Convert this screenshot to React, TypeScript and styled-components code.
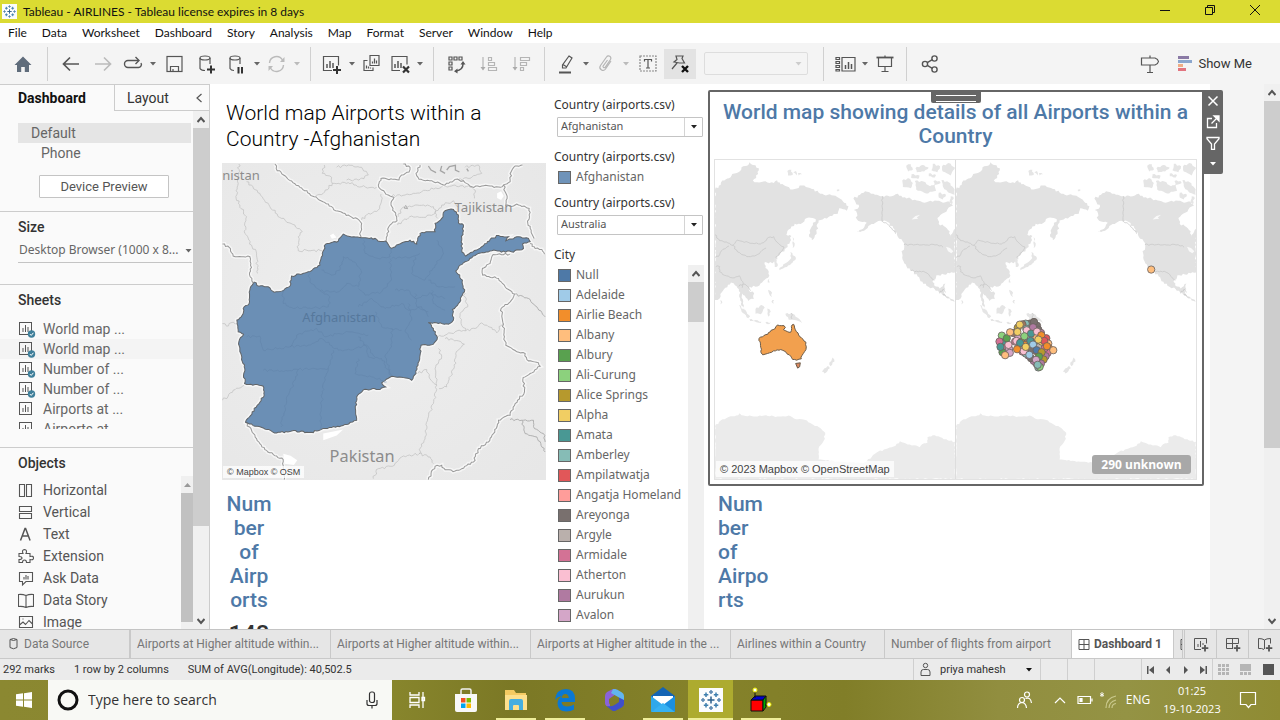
import React from "react";
import styled, { createGlobalStyle } from "styled-components";

const UI = 'Lato, "Open Sans", sans-serif';
const TASK = '"Open Sans", "Noto Sans", sans-serif';
const BOOK = 'Roboto, "Liberation Sans", sans-serif';
const WIDE = '"Noto Sans", "Open Sans", sans-serif';

const Global = createGlobalStyle`
  * { box-sizing: border-box; }
  html, body { margin: 0; padding: 0; }
  body { font-family: ${BOOK}; color: #333; background: #fff; overflow: hidden; }
  button, select, input { font: inherit; color: inherit; margin: 0; border-radius: 0; }
  button { background: none; border: 0; padding: 0; cursor: default; }
  ul { list-style: none; margin: 0; padding: 0; }
  h2, h3 { margin: 0; }
  svg { display: block; flex: none; }
`;

const Page = styled.div`
  display: flex;
  flex-direction: column;
  height: 100vh;
`;

/* ---------- icons ---------- */

type GlyphProps = {
  w?: number;
  h?: number;
  vb?: string;
  sw?: number;
  color?: string;
  children: React.ReactNode;
};

const Glyph = ({ w = 20, h = 20, vb, sw = 1.2, color = "#555", children }: GlyphProps) => (
  <svg
    width={w}
    height={h}
    viewBox={vb ?? `0 0 ${w} ${h}`}
    fill="none"
    stroke={color}
    strokeWidth={sw}
    aria-hidden="true"
  >
    {children}
  </svg>
);

const Caret = ({ color = "#666", w = 6 }: { color?: string; w?: number }) => (
  <Glyph w={w} h={4} vb="0 0 6 4" sw={0}>
    <path d="M0 0h6L3 3.6z" fill={color} />
  </Glyph>
);

const TableauMark = ({ size }: { size: number }) => (
  <svg width={size} height={size} viewBox="0 0 24 24" aria-hidden="true">
    <rect width="24" height="24" fill="#fbfcfd" />
    <g stroke="#3f7fae" strokeWidth="1.500">
      <path d="M12 8.500v7M8.500 12h7" stroke="#2c5f8c" />
      <path d="M12 2v4M10 4h4M12 18v4M10 20h4M2 12h4M4 10v4M18 12h4M20 10v4" stroke="#5b86b0" />
      <path d="M7 4.500v4.500M4.800 6.800h4.500M17 4.500v4.500M14.800 6.800h4.500M7 15v4.500M4.800 17.200h4.500M17 15v4.500M14.800 17.200h4.500" />
    </g>
  </svg>
);

const Bars = ({ x, y, color = "#555" }: { x: number; y: number; color?: string }) => (
  <path d={`M${x} ${y}v-4M${x + 3} ${y}v-7M${x + 6} ${y}v-5`} stroke={color} strokeWidth="1.5" />
);

/* ---------- title bar and menu ---------- */

const TitleBar = styled.header`
  display: flex;
  align-items: center;
  height: 23px;
  flex: none;
  padding: 0 3px 0 2px;
  background: #dbdb32;
  color: #111;
  font: 12px/16px ${UI};
  gap: 6px;
`;

const WindowButtons = styled.div`
  display: flex;
  margin-left: auto;
  height: 100%;
`;

const WindowButton = styled.button`
  width: 45px;
  display: grid;
  place-items: center;
  padding-bottom: 3px;
`;

const MenuBar = styled.nav`
  display: flex;
  align-items: center;
  gap: 15px;
  height: 20px;
  flex: none;
  padding-left: 8px;
  font: 12px/16px ${UI};
  color: #111;
  white-space: nowrap;
`;

/* ---------- toolbar ---------- */

const ToolBar = styled.div`
  display: flex;
  align-items: center;
  height: 41px;
  flex: none;
  padding: 0 28px 0 6px;
  background: #f4f4f4;
`;

const ToolButton = styled.button<{ $w?: number; $active?: boolean }>`
  display: grid;
  place-items: center;
  width: ${(p) => p.$w ?? 28}px;
  height: 30px;
  flex: none;
  background: ${(p) => (p.$active ? "#e3e3e3" : "transparent")};
`;

const Separator = styled.span`
  width: 1px;
  height: 34px;
  margin: 0 7px;
  background: #d0d0d0;
  flex: none;
`;

const FitBox = styled.div`
  position: relative;
  width: 104px;
  margin: 0 8px;
  flex: none;
  svg {
    position: absolute;
    right: 6px;
    top: 10px;
    pointer-events: none;
  }
`;

const FitSelect = styled.select`
  display: block;
  width: 100%;
  height: 23px;
  appearance: none;
  border: 1px solid #d4d4d4;
  border-radius: 2px;
  background: #f4f4f4;
`;

const Spring = styled.span`
  flex: 1;
`;

const ShowMe = styled.button`
  display: flex;
  align-items: center;
  gap: 6px;
  margin-left: 12px;
  font-size: 13px;
  line-height: 20px;
  color: #333;
`;

const DropCaret = ({ off, label }: { off?: boolean; label: string }) => (
  <ToolButton $w={12} aria-label={label}>
    <Caret color={off ? "#bbb" : "#666"} />
  </ToolButton>
);

const Toolbar = () => (
  <ToolBar>
    <ToolButton $w={34} aria-label="Start page">
      <Glyph sw={0}>
        <path d="M10 2.500L18.500 11H16v7h-4.200v-5H8.200v5H4v-7H1.500z" fill="#5f6c7b" />
      </Glyph>
    </ToolButton>
    <Separator />
    <ToolButton $w={32} aria-label="Undo">
      <Glyph sw={1.7}><path d="M18 10H3M9 3.500L2.500 10l6.500 6.500" /></Glyph>
    </ToolButton>
    <ToolButton $w={32} aria-label="Redo">
      <Glyph sw={1.7} color="#bbb"><path d="M2 10h15M11 3.500l6.500 6.500-6.500 6.500" /></Glyph>
    </ToolButton>
    <ToolButton aria-label="Replay">
      <Glyph sw={1.4}>
        <path d="M15 6.500H5a3.500 3.500 0 0 0 0 7h10a3 3 0 0 0 3-4.500" />
        <path d="M12.500 3l3.500 3.500-3.500 3.500" />
      </Glyph>
    </ToolButton>
    <DropCaret label="Replay options" />
    <ToolButton $w={32} aria-label="Save">
      <Glyph><rect x="2" y="2.500" width="15" height="15" /><path d="M5.500 17.500v-5h8v5M8 17.500v-2.500" /></Glyph>
    </ToolButton>
    <ToolButton $w={32} aria-label="New data source">
      <Glyph>
        <ellipse cx="8" cy="4" rx="5" ry="2" />
        <path d="M3 4v10.500q1 2 5 2M13 4v6" />
        <path d="M14 11.500v8M10 15.500h8" stroke="#333" strokeWidth="2" />
      </Glyph>
    </ToolButton>
    <ToolButton aria-label="Pause updates">
      <Glyph>
        <ellipse cx="8" cy="4" rx="5" ry="2" />
        <path d="M3 4v10.500q1 2 4 2M13 4v6" />
        <path d="M11.500 13v6.500M15 13v6.500" stroke="#333" strokeWidth="2" />
      </Glyph>
    </ToolButton>
    <DropCaret label="Update options" />
    <ToolButton aria-label="Run update">
      <Glyph color="#bbb" sw={1.4}>
        <path d="M2.500 9a7 7 0 0 1 13-3M16.500 11a7 7 0 0 1-13 3" />
        <path d="M17.500 3v5h-4.500zM1.500 17v-5H6z" fill="#bbb" stroke="none" />
      </Glyph>
    </ToolButton>
    <DropCaret off label="Run options" />
    <Separator />
    <ToolButton aria-label="New worksheet">
      <Glyph>
        <path d="M10 16.500H1.500v-14h15v9" /><Bars x={5} y={14} />
        <path d="M15 12v8M11 16h8" stroke="#333" strokeWidth="2" />
      </Glyph>
    </ToolButton>
    <DropCaret label="New options" />
    <ToolButton aria-label="Duplicate">
      <Glyph>
        <path d="M8 1.500h9v10H8zM5.500 6.500H2v10h9v-3" />
        <path d="M10.500 9.500v-2M12.500 9.500v-5M14.500 9.500v-3M4.500 14.500v-3M6.500 14.500v-2M8.500 14.500v-1" />
      </Glyph>
    </ToolButton>
    <ToolButton aria-label="Clear sheet">
      <Glyph>
        <path d="M10 16.500H2v-14h15v8" /><Bars x={5} y={14} />
        <path d="M13 12.500l6 6M19 12.500l-6 6" stroke="#333" strokeWidth="2.200" />
      </Glyph>
    </ToolButton>
    <DropCaret label="Clear options" />
    <Separator />
    <ToolButton $w={32} aria-label="Swap rows and columns">
      <Glyph>
        <path d="M2 3h3v3H2zM7 3h3v3H7zM12 3h3v3h-3zM2 8h3v3H2zM2 13h3v3H2z" />
        <path d="M16 10q0 6-7 7" strokeWidth="1.500" />
        <path d="M13.500 10.500L16 7l2.500 3.500zM10.500 14.500L7 17.200l3.500 2.300z" fill="#555" stroke="none" />
      </Glyph>
    </ToolButton>
    <ToolButton $w={32} aria-label="Sort ascending">
      <Glyph color="#b5b5b5">
        <path d="M4 3v12M9.500 3.500h3v3h-3zM9.500 8.500h6v3h-6zM9.500 13.500h8v3h-8z" />
        <path d="M1.500 13L4 16.500 6.500 13z" fill="#aaa" stroke="none" />
      </Glyph>
    </ToolButton>
    <ToolButton $w={32} aria-label="Sort descending">
      <Glyph color="#b5b5b5">
        <path d="M4 3v12M9.500 3.500h9v3h-9zM9.500 8.500h6v3h-6zM9.500 13.500h3v3h-3z" />
        <path d="M1.500 13L4 16.500 6.500 13z" fill="#aaa" stroke="none" />
      </Glyph>
    </ToolButton>
    <Separator />
    <ToolButton aria-label="Highlight">
      <Glyph>
        <path d="M13 2l3 2-6 10H6.500V11zM7 10.500l3.500 2.200" />
        <path d="M3 18.500h12" strokeWidth="2" />
      </Glyph>
    </ToolButton>
    <DropCaret label="Highlight options" />
    <ToolButton aria-label="Group members">
      <Glyph color="#b5b5b5">
        <path d="M15 7l-5.500 8a3 3 0 0 1-5-3.500L10.500 3a2.300 2.300 0 0 1 4 2.500L9 13.500a1.300 1.300 0 0 1-2-1.300L11.500 6" />
      </Glyph>
    </ToolButton>
    <DropCaret off label="Group options" />
    <ToolButton $w={32} aria-label="Show mark labels">
      <Glyph color="#888">
        <rect x="2" y="2" width="16" height="15" strokeDasharray="2 1" />
        <path d="M6.500 7.500v-2h7v2M10 5.500v8.500M8 14h4" stroke="#555" />
      </Glyph>
    </ToolButton>
    <ToolButton $w={32} $active aria-label="Fix axes">
      <Glyph>
        <path d="M6 2h7l-1 2.500 2.500 4.500H9.500L4 8l3-2.500zM7 9L2 15" />
        <path d="M12 12l6 6M18 12l-6 6" stroke="#111" strokeWidth="2.400" />
      </Glyph>
    </ToolButton>
    <FitBox>
      <FitSelect aria-label="Fit" disabled><option /></FitSelect>
      <Caret color="#ccc" w={7} />
    </FitBox>
    <Separator />
    <ToolButton aria-label="Show cards">
      <Glyph w={22}>
        <path d="M2 3.500h3.500v2H2zM2 7.500h3.500v2H2zM2 11.500h3.500v2H2zM2 15.500h3.500v1.500H2zM8 3.500h13V17H8z" />
        <Bars x={11.5} y={15} />
      </Glyph>
    </ToolButton>
    <DropCaret label="Card options" />
    <ToolButton aria-label="Presentation mode">
      <Glyph>
        <path d="M1.500 3.500h17" strokeWidth="1.800" /><path d="M3.500 4v8.500h13V4M10 12.500v5M6.500 17.500h7M10 1.500v2" />
      </Glyph>
    </ToolButton>
    <Separator />
    <ToolButton $w={32} aria-label="Share">
      <Glyph sw={1.4}>
        <circle cx="5" cy="10" r="2.600" /><circle cx="14.500" cy="4.500" r="2.600" /><circle cx="14.500" cy="15.500" r="2.600" />
        <path d="M7.300 8.700l5-3M7.300 11.300l5 3" />
      </Glyph>
    </ToolButton>
    <Spring />
    <ToolButton $w={32} aria-label="Guide">
      <Glyph>
        <path d="M1.500 4H15q3 1 3.500 3.500-.5 2.500-3.500 3.500H1.500zM10 1.500V4M10 11v7M7 18.500h6" />
      </Glyph>
    </ToolButton>
    <ShowMe>
      <svg width="14" height="16" viewBox="0 0 14 16" aria-hidden="true">
        <path d="M0 0h11v3H0z" fill="#8a7aa5" />
        <path d="M0 4h14v3H0z" fill="#8ba6cd" />
        <path d="M0 8h5v3H0z" fill="#efad85" />
        <path d="M0 12h8v3H0z" fill="#e2747f" />
      </svg>
      Show Me
    </ShowMe>
  </ToolBar>
);

/* ---------- side panel ---------- */

const Body = styled.div`
  display: flex;
  flex: 1;
  min-height: 0;
  overflow: hidden;
`;

const Side = styled.aside`
  display: flex;
  flex-direction: column;
  width: 210px;
  flex: none;
  border-top: 1px solid #ccc;
  border-right: 1px solid #ccc;
  background: #fafafa;
  overflow: hidden;
`;

const SideTabs = styled.div`
  display: flex;
  height: 26px;
  flex: none;
`;

const SideTab = styled.button<{ $on?: boolean }>`
  width: ${(p) => (p.$on ? "114px" : "auto")};
  flex: ${(p) => (p.$on ? "none" : "1")};
  padding-left: ${(p) => (p.$on ? "18px" : "12px")};
  text-align: left;
  font-size: 14px;
  font-weight: ${(p) => (p.$on ? 700 : 400)};
  color: ${(p) => (p.$on ? "#111" : "#333")};
  border: solid #ccc;
  border-width: ${(p) => (p.$on ? "0" : "0 0 1px 1px")};
`;

const Collapse = styled.button`
  width: 21px;
  border-bottom: 1px solid #ccc;
  display: grid;
  place-items: center;
`;

const SideBody = styled.div`
  display: flex;
  flex: 1;
  min-height: 0;
`;

const SideContent = styled.div`
  display: flex;
  flex-direction: column;
  flex: 1;
  min-width: 0;
`;

const Section = styled.section<{ $h?: number }>`
  flex: ${(p) => (p.$h ? "none" : "1")};
  min-height: ${(p) => (p.$h ? `${p.$h}px` : "0")};
  padding-left: 18px;
  border-bottom: 1px solid #ccc;
  overflow: hidden;
  &:last-child { border: 0; }
`;

const Heading = styled.h3`
  display: block;
  padding-top: 5px;
  font-size: 14px;
  line-height: 20px;
  font-weight: 500;
  color: #333;
`;

const DeviceBox = styled.div`
  padding-top: 12px;
`;

const Device = styled.button<{ $on?: boolean }>`
  display: block;
  width: calc(100% - 2px);
  height: 20px;
  padding-left: ${(p) => (p.$on ? 13 : 23)}px;
  background: ${(p) => (p.$on ? "#e5e5e5" : "transparent")};
  text-align: left;
  font-size: 14px;
  color: #666;
`;

const Preview = styled.button`
  display: block;
  width: 130px;
  height: 23px;
  margin: 12px 0 0 21px;
  border: 1px solid #c4c4c4;
  border-radius: 1px;
  background: #fff;
  font-size: 13px;
  color: #555;
`;

const SizeBox = styled.div`
  position: relative;
  margin-top: 3px;
  margin-right: 1px;
  border-bottom: 1px solid #c4c4c4;
  svg { position: absolute; right: 0; top: 9px; pointer-events: none; }
  select {
    display: block;
    width: 100%;
    height: 22px;
    padding: 0 0 2px 1px;
    appearance: none;
    border: 0;
    background: transparent;
    font: 12px/20px ${WIDE};
    color: #666;
  }
`;

const SheetList = styled.ul`
  height: 110px;
  margin: 9px 0 0 -18px;
  overflow: hidden;
`;

const SheetItem = styled.li<{ $hot?: boolean }>`
  display: flex;
  align-items: center;
  gap: 7px;
  height: 20px;
  padding-left: 18px;
  font-size: 14px;
  color: #666;
  background: ${(p) => (p.$hot ? "#f4f4f4" : "transparent")};
`;

const ObjectArea = styled.div`
  display: flex;
  margin-top: 3px;
  height: 154px;
`;

const ObjectList = styled.ul`
  flex: 1;
  padding-top: 3px;
`;

const ObjectItem = styled.li`
  display: flex;
  align-items: center;
  gap: 9px;
  height: 22px;
  font-size: 14px;
  color: #555;
`;

const Track = styled.div<{ $w: number }>`
  display: flex;
  flex-direction: column;
  align-items: center;
  width: ${(p) => p.$w}px;
  flex: none;
  background: #f0f0f0;
`;

const TrackEnd = styled.button`
  display: grid;
  place-items: center;
  width: 100%;
  height: 17px;
  flex: none;
`;

const Thumb = styled.div<{ $share: number; $tone?: string }>`
  width: 100%;
  flex: ${(p) => p.$share} 0 0;
  background: ${(p) => p.$tone ?? "#cdcdcd"};
`;

const Rest = styled.div<{ $share: number }>`
  flex: ${(p) => p.$share} 0 0;
`;

const Up = () => (
  <Glyph w={8} h={8} sw={2}><path d="M.5 6L4 2l3.500 4" /></Glyph>
);
const Down = () => (
  <Glyph w={8} h={8} sw={2}><path d="M.5 2L4 6l3.500-4" /></Glyph>
);

const SheetIcon = ({ used }: { used: boolean }) => (
  <Glyph w={18} h={18} sw={1}>
    <rect x="1.500" y="2.500" width="12" height="12" />
    <path d="M5 12V8M7.500 12V5M10 12V7" />
    {used && (
      <>
        <circle cx="13.500" cy="14" r="3.700" fill="#3f7f9a" stroke="none" />
        <path d="M11.800 14l1.400 1.400 2.200-2.600" stroke="#fff" />
      </>
    )}
  </Glyph>
);

const SHEETS: [string, boolean][] = [
  ["World map ...", true],
  ["World map ...", true],
  ["Number of ...", true],
  ["Number of ...", true],
  ["Airports at ...", false],
  ["Airports at ...", false],
];

const OBJECTS: [string, React.ReactNode][] = [
  ["Horizontal", <path d="M1.500 2.500h5v12h-5zM8.500 2.500h5v12h-5z" />],
  ["Vertical", <path d="M1.500 2.500h12v5h-12zM1.500 9.500h12v5h-12z" />],
  ["Text", <path d="M2.500 14.500L7 2.500h.6l4.500 12M4.300 10h6" strokeWidth="1.500" />],
  ["Extension", <path d="M1 5.500h4q-1.500-3.500 1.500-4 3 .5 1.500 4h4v3q3.500-1 3.500 1.500T12 11.500V14.500H8.500q0-2.500-2-2.500t-2 2.500H1v-3q3 0 3-1.500T1 8.500z" />],
  ["Ask Data", <path d="M1.500 2.500h13v9H8L4.500 15v-3.500h-3zM6 9.500V7M8 9.500V5M10 9.500V6" />],
  ["Data Story", <path d="M.5 2.500q4-.5 7.500 1 3.500-1.500 7.500-1v12q-4-.5-7.500 1-3.500-1.500-7.500-1zM8 3.500v12" />],
  ["Image", <path d="M1.500 2.500h13v11h-13zM1.500 11l3.500-3 2.500 2.500 3.500-4L14.500 10M4.500 5h1" />],
];

const SidePanel = () => (
  <Side>
    <SideTabs>
      <SideTab $on>Dashboard</SideTab>
      <SideTab>Layout</SideTab>
      <Collapse aria-label="Collapse">
        <Glyph w={8} h={12}><path d="M6.500 2L2 6l4.500 4" /></Glyph>
      </Collapse>
    </SideTabs>
    <SideBody>
      <SideContent>
        <Section $h={101}>
          <DeviceBox>
            <Device $on>Default</Device>
            <Device>Phone</Device>
            <Preview>Device Preview</Preview>
          </DeviceBox>
        </Section>
        <Section $h={73}>
          <Heading as="label" htmlFor="size">Size</Heading>
          <SizeBox>
            <select id="size"><option>Desktop Browser (1000 x 8...</option></select>
            <Caret w={7} />
          </SizeBox>
        </Section>
        <Section $h={163}>
          <Heading>Sheets</Heading>
          <SheetList>
            {SHEETS.map(([name, used], i) => (
              <SheetItem key={i} $hot={i === 1}>
                <SheetIcon used={used} />
                {name}
              </SheetItem>
            ))}
          </SheetList>
        </Section>
        <Section>
          <Heading>Objects</Heading>
          <ObjectArea>
            <ObjectList>
              {OBJECTS.map(([name, art]) => (
                <ObjectItem key={name}>
                  <Glyph w={16} h={17} sw={1.1}>{art}</Glyph>
                  {name}
                </ObjectItem>
              ))}
            </ObjectList>
            <Track $w={12}>
              <TrackEnd aria-label="Scroll objects up">
                <Glyph w={7} h={4} sw={0}><path d="M0 4h7L3.500 0z" fill="#999" /></Glyph>
              </TrackEnd>
              <Thumb $share={127} $tone="#c1c1c1" />
              <Rest $share={8} />
            </Track>
          </ObjectArea>
        </Section>
      </SideContent>
      <Track $w={16}>
        <TrackEnd aria-label="Scroll up"><Up /></TrackEnd>
        <Thumb $share={399} />
        <Rest $share={86} />
        <TrackEnd aria-label="Scroll down"><Down /></TrackEnd>
      </Track>
    </SideBody>
  </Side>
);

/* ---------- dashboard canvas ---------- */

const Canvas = styled.main`
  display: grid;
  grid-template-columns: minmax(0, 324fr) 162px minmax(0, 496fr);
  grid-template-rows: minmax(0, 1fr);
  flex: 1;
  min-width: 0;
  padding: 0 6px 0 12px;
  background: #fff;
`;

const Margin = styled.div`
  width: 54px;
  flex: none;
  background: #f4f4f4;
`;

const Column = styled.div`
  min-width: 0;
`;

const PlainTitle = styled.h2`
  height: 79px;
  padding: 16px 4px 0;
  font-size: 21px;
  line-height: 26px;
  font-weight: 300;
  color: #000;
`;

const MapFrame = styled.div<{ $h: number }>`
  position: relative;
  height: ${(p) => p.$h}px;
  overflow: hidden;
  svg { width: 100%; height: 100%; }
`;

const Credit = styled.span<{ $big?: boolean }>`
  position: absolute;
  left: 1px;
  bottom: 2px;
  padding: 0 4px;
  background: rgba(255, 255, 255, 0.75);
  font: ${(p) => (p.$big ? "11px/16px" : "9px/12px")} "Liberation Sans", sans-serif;
  color: #444;
`;

const Narrow = styled.h2<{ $center?: boolean }>`
  width: 54px;
  margin-left: ${(p) => (p.$center ? 0 : 10)}px;
  padding-top: ${(p) => (p.$center ? 12 : 6)}px;
  text-align: ${(p) => (p.$center ? "center" : "left")};
  font-size: 21px;
  line-height: 24px;
  font-weight: 500;
  color: #4e79a7;
  span { display: block; }
`;

const BigNumber = styled.div`
  width: 54px;
  padding-top: 8px;
  text-align: center;
  font-size: 24px;
  line-height: 28px;
  font-weight: 500;
  color: #333;
`;

const Filters = styled(Column)`
  display: flex;
  flex-direction: column;
  padding: 11px 5px 0 8px;
  font: 12px/20px ${WIDE};
  overflow: hidden;
`;

const FieldLabel = styled.label`
  display: block;
  color: #333;
`;

const Picker = styled.div`
  position: relative;
  margin: 2px 0 10px 3px;
  border: 1px solid #c4c4c4;
  border-radius: 1px;
  select {
    display: block;
    width: 100%;
    height: 18px;
    padding: 0 0 2px 3px;
    appearance: none;
    border: 0;
    background: #fff;
    font-size: 11px;
    line-height: 16px;
    color: #555;
  }
`;

const PickerArrow = styled.span`
  position: absolute;
  top: 0;
  right: 0;
  display: grid;
  place-items: center;
  width: 18px;
  height: 18px;
  border-left: 1px solid #d4d4d4;
  pointer-events: none;
`;

const LegendItem = styled.li`
  display: flex;
  align-items: center;
  gap: 5px;
  height: 20px;
  padding-left: 4px;
  color: #666;
  white-space: nowrap;
`;

const Swatch = styled.span<{ $c: string }>`
  width: 13px;
  height: 13px;
  border: 1px solid #666;
  background: ${(p) => p.$c};
`;

const LegendBlock = styled.div`
  height: 26px;
`;

const CityArea = styled.div`
  display: flex;
  flex: 1;
  min-height: 0;
  overflow: hidden;
  margin-right: -1px;
  ul { flex: 1; }
`;

const Zone = styled.section`
  position: relative;
  height: 396px;
  margin-top: 6px;
  padding: 8px 5px 0 4px;
  border: 2px solid #666;
  border-radius: 2px;
`;

const ZoneTitle = styled.h2`
  height: 59px;
  text-align: center;
  font-size: 21px;
  line-height: 24px;
  font-weight: 500;
  color: #4e79a7;
`;

const Grip = styled.div`
  position: absolute;
  top: -2px;
  left: calc(50% - 25px);
  width: 50px;
  height: 13px;
  padding: 5px 5px 0;
  background: #666;
  border-radius: 0 0 2px 2px;
  &::before {
    content: "";
    display: block;
    height: 5px;
    border: solid #fff;
    border-width: 1px 0;
  }
`;

const ZoneTools = styled.div`
  position: absolute;
  z-index: 1;
  top: -2px;
  left: 100%;
  width: 21px;
  height: 84px;
  background: #666;
  border-radius: 0 2px 2px 0;
  button { display: grid; place-items: center; width: 100%; height: 21px; }
`;

const WorldFrame = styled(MapFrame)`
  display: flex;
  border: 1px solid #e2e2e2;
  svg { flex: 1; width: 50%; }
  svg + svg { border-left: 1px solid #ddd; }
`;

const Unknown = styled.button`
  position: absolute;
  right: 5px;
  bottom: 5px;
  width: 99px;
  height: 19px;
  border-radius: 3px;
  background: #a8a8a8;
  color: #fff;
  font: 700 12px/18px ${TASK};
`;

/* Breaks each straight run of "x,y x,y ..." into short wandering steps, so it reads as a coast or border. */
const rough = (points: string, amp: number, closed = false) => {
  const pts = points.trim().split(/\s+/).map((p) => p.split(",").map(Number));
  if (closed) pts.push(pts[0]);
  let seed = 7;
  const rnd = () => {
    seed = (seed * 16807) % 2147483647;
    return seed / 2147483647 - 0.5;
  };
  let d = `M${pts[0][0]} ${pts[0][1]}`;
  for (let i = 1; i < pts.length; i++) {
    const [x0, y0] = pts[i - 1];
    const [x1, y1] = pts[i];
    const len = Math.hypot(x1 - x0, y1 - y0) || 1;
    const n = Math.max(1, Math.round(len / 6));
    for (let k = 1; k < n; k++) {
      const t = k / n;
      const off = rnd() * amp;
      const x = x0 + (x1 - x0) * t - ((y1 - y0) / len) * off;
      const y = y0 + (y1 - y0) * t + ((x1 - x0) / len) * off;
      d += `L${Math.round(x)} ${Math.round(y)}`;
    }
    d += `L${x1} ${y1}`;
  }
  return closed ? `${d}Z` : d;
};

const Lines = ({ list, amp = 6 }: { list: string[]; amp?: number }) => (
  <path d={list.map((l) => rough(l, amp)).join("")} />
);
const Shapes = ({ list, amp = 5 }: { list: string[]; amp?: number }) => (
  <path d={list.map((l) => rough(l, amp, true)).join("")} />
);

const NATIONAL = [
  "180,222 184,236 215,262 255,292 298,320 340,342 362,362 400,375 432,390 440,400 437,425 435,445",
  "23,462 43,472 55,498 105,500 108,520 106,560 114,578",
  "92,996 110,1020 125,1045 150,1078 175,1092 205,1108 208,1168",
  "565,222 585,232 582,246 560,255 552,270 498,265 490,285 500,300 520,315 537,322 528,345 542,375 546,392 525,405 516,430 513,455",
  "615,225 603,250 612,268 650,272 690,285 720,268 745,272 770,290 800,288 862,290 885,275 888,245 900,228 922,225",
  "865,285 870,305 876,325 872,345 895,348 905,342 942,355 943,380 938,400 948,420 957,445",
  "945,460 960,475 980,478 988,492",
  "884,492 834,493 825,520 802,535 803,555 850,565 880,598 898,612 885,635 858,655 862,690 868,740 872,765 905,785 930,790 935,808 970,818 975,828 950,848 924,862 928,905 900,940 885,975 850,990 835,1030 820,1055 790,1075 775,1115 740,1135 720,1142 690,1138 680,1125 660,1128 648,1150 640,1168",
];
const MINOR = [
  "898,612 940,625 965,650 990,680",
  "885,988 925,990 955,990 958,1015 985,1030 990,1055",
  "920,990 930,1030 965,1040 990,1085",
];
const PROVINCES = [
  "72,222 70,280 64,325 95,380 90,430 125,490 128,550",
  "95,275 135,310 165,350 200,385 240,405 262,425 250,440 250,482 322,482",
  "328,225 322,250 350,262 352,280 400,278 440,290 485,292",
  "352,280 325,310 300,320", "365,232 400,225 440,232 460,255 430,270 395,270",
  "440,390 455,375 490,360 500,330 498,312", "530,318 570,315 620,305 680,290 720,285 765,292 780,300 778,325",
  "548,405 560,395 590,378 625,382 660,370 680,345 715,332 730,350", "550,380 560,355 600,345 625,345 655,350 668,385",
  "750,232 790,225 800,250 770,262 730,268",
  "23,700 35,708 48,698 68,700", "23,930 40,918 55,900 88,885",
  "745,605 758,650 735,670 738,700 752,722 720,725 685,738 668,740",
  "752,722 780,715 800,698 830,712 845,728 862,700", "690,745 730,752 748,762 722,790 718,830 695,890 672,895",
  "608,850 635,838 648,870 665,885 655,940 640,980 630,1040 612,1090", "670,775 680,800 662,830 665,885",
  "612,1090 560,1100 538,1125 490,1135 475,1165", "612,1090 645,1100 655,1120",
];
const AFGHAN =
  "118,576 132,588 160,590 178,606 200,603 226,587 230,558 280,545 315,525 322,490 332,462 370,453 385,432 410,441 440,443 480,445 495,454 512,453 530,475 550,463 585,450 605,462 615,430 640,425 660,425 660,400 680,385 690,362 715,358 730,375 730,398 745,405 740,450 740,480 752,498 800,470 815,460 825,448 850,436 880,440 872,452 905,440 940,445 945,455 922,462 925,475 895,486 830,482 790,490 750,515 735,525 722,543 742,570 748,605 730,640 712,658 715,690 700,702 640,697 655,715 667,742 655,762 618,765 615,795 605,830 603,850 590,870 565,862 530,858 500,878 512,890 495,898 450,897 425,920 422,960 425,990 395,1003 350,1012 318,1018 288,1026 230,1022 185,1028 92,996 148,915 145,888 89,880 88,830 78,790 72,755 86,732 70,725 66,690 85,670 85,655 103,640 105,600";
const DISTRICTS = [
  "280,545 285,575 315,600 345,620 340,650 290,655 230,652 205,640 205,600",
  "315,603 370,605 395,580 430,590 438,540 410,510 385,500 375,540 350,555 320,540",
  "445,450 450,490 490,505 525,500 530,475", "525,505 530,570 500,605 450,615 430,595",
  "530,505 590,500 615,490", "600,500 590,550 630,570 660,525 685,490 665,450",
  "640,570 670,590 720,590", "540,600 580,600 600,625 650,610 690,625", "430,650 470,625 510,655 560,640 580,660 620,650 640,680",
  "580,640 590,690 570,725 590,750", "480,665 500,710 560,720", "95,740 135,738 145,780 225,770 245,735 305,715 330,740 400,725 460,735",
  "225,770 280,765 320,745 370,780 420,775 455,765 480,800", "355,780 340,840 325,880 320,950 316,1016",
  "145,840 200,842 250,838 240,870 215,930 198,1010", "250,838 300,835 340,835", "430,805 420,850 470,860 515,875",
  "430,740 455,770 460,800 500,805 528,855", "530,715 530,770 510,800 530,855", "600,610 605,650 640,665", "650,600 655,640 690,660",
];

const AfghanMap = () => (
  <svg viewBox="21 219 972 950" preserveAspectRatio="xMidYMid slice" role="img" aria-label="Map of Afghanistan">
    <defs>
      <radialGradient id="relief" cx="45%" cy="45%" r="75%">
        <stop offset="0" stopColor="#eeeeee" />
        <stop offset="1" stopColor="#e7e7e7" />
      </radialGradient>
    </defs>
    <rect x="21" y="219" width="972" height="950" fill="url(#relief)" />
    <g fill="none" stroke="#f6f6f6" strokeWidth="12">
      <Lines list={NATIONAL} />
      <Shapes list={[AFGHAN]} />
    </g>
    <path d="M846 310l12-6 8 14-8 12-12-6zM205 1090l22 6 20 14-10 14-28-4zM325 1030l60-12-20 18-40 14zM345 436l10-6 10 12-14 4z" fill="#fff" />
    <g fill="none" stroke="#bcbcbc" strokeWidth="2"><Lines list={PROVINCES} amp={8} /></g>
    <g fill="none" stroke="#999" strokeWidth="3"><Lines list={NATIONAL} /></g>
    <g fill="none" stroke="#a5a5a5" strokeWidth="2.500">
      <Lines list={MINOR} />
      <path d="M567 354l5-8 6 10z" />
      <path d="M640 228l8 12 15 8M680 228l-4 14 14 8M695 240l8-10 18-4 0 14 12 6M755 236l5 8" strokeWidth="4" />
    </g>
    <g fill="#6b8fb5" stroke="#606468" strokeWidth="3"><Shapes list={[AFGHAN]} /></g>
    <g fill="none" stroke="#6083a8" strokeWidth="1.500"><Lines list={DISTRICTS} amp={8} /></g>
    <g fontFamily={WIDE} fill="#8c8c8c">
      <text x="22" y="270" fontSize="39">nistan</text>
      <text x="718" y="366" fontSize="40">Tajikistan</text>
      <text x="262" y="696" fontSize="39" fill="#56789c">Afghanistan</text>
      <text x="344" y="1114" fontSize="49">Pakistan</text>
    </g>
  </svg>
);

const CONTINENTS = [
  // Asia
  "28,312 45,298 50,285 70,278 80,265 102,258 108,245 125,240 132,230 142,238 160,248 158,265 142,285 155,290 180,287 205,292 215,284 225,296 245,303 262,312 290,300 320,310 345,325 385,330 405,340 430,362 425,376 402,368 398,385 370,395 340,405 334,440 320,465 312,455 316,430 332,402 305,398 292,412 268,415 250,432 243,448 258,452 252,475 238,492 222,510 205,530 190,535 178,530 180,548 190,560 188,578 170,592 150,605 132,605 130,615 146,625 145,642 128,648 118,632 110,625 112,655 122,680 108,662 104,640 100,618 88,600 76,592 55,612 42,640 28,645",
  // North America
  "445,340 465,328 480,317 505,325 532,332 560,332 572,326 600,335 630,343 665,350 690,345 715,352 735,348 745,360 728,372 712,385 698,398 702,415 722,425 735,438 738,455 745,440 751,430 751,562 735,564 718,568 695,570 686,585 688,600 705,610 722,595 722,612 718,622 735,640 750,650 735,640 712,628 690,612 665,602 645,582 622,556 608,550 596,528 592,505 598,480 590,462 576,448 565,428 548,410 532,408 515,410 500,416 488,428 470,438 455,441 478,425 485,412 465,408 452,396 456,384 446,374 462,364 452,352",
];
const ISLANDS = [
  "262,455 268,480 262,488", "255,500 272,518 262,532 245,545 222,555 222,548 244,532 258,518", "205,520 214,525 217,542 208,545",
  "187,592 192,580 193,592", "188,614 196,618 200,636 194,632", "198,650 206,645 205,656", "100,660 114,672 134,694 128,700 108,680",
  "132,703 168,710 166,714 134,708", "150,672 168,660 178,668 166,688 150,686", "186,670 196,680 190,695 186,685",
  "240,686 262,686 282,702 290,714 272,706 250,704", "180,712 196,712 188,718", "44,645 50,653 44,658",
  "382,818 388,830 376,844 372,838", "366,844 374,850 358,866 350,860", "246,256 258,252 262,268 248,270", "264,260 272,256 274,270",
  "278,262 290,266 280,270", "394,313 404,313 398,318", "592,285 612,278 624,292 618,308 594,304", "630,286 656,288 676,302 690,296 694,316 664,324 634,312",
  "604,240 618,236 624,252 610,258", "632,248 652,238 672,246 658,258 636,260", "684,234 706,242 698,260 680,254",
  "712,242 732,232 751,246 738,270 714,258", "686,286 704,286 708,292 690,298", "710,284 732,290 750,312 750,328 732,322 716,306",
  "702,322 724,328 714,342 702,336", "672,264 694,268 690,276 672,272", "738,332 746,334 742,356 736,352", "620,266 644,270 640,280 618,276",
];
const ANTARCTICA =
  "28,1025 45,1008 75,995 98,992 102,986 108,992 150,996 182,992 216,996 250,993 272,1004 300,1006 320,1018 345,1030 360,1045 356,1068 340,1092 340,1125 385,1130 475,1136 500,1118 515,1104 548,1092 572,1084 585,1070 615,1080 645,1088 658,1076 668,1075 668,1058 690,1052 712,1060 730,1068 751,1072 751,1184 28,1184";
const WORLD_BORDERS = [
  "532,332 532,408 548,416 560,428 572,445", "597,478 697,478 715,486", "618,556 640,560 655,558 672,568 688,586",
  "705,625 715,612 722,622", "715,628 735,640",
  "28,448 42,466 62,470 82,480 95,464 110,468 140,474 165,476 178,468 190,456 205,454 214,470 236,485 228,500 210,516",
  "82,480 96,500 124,514 152,510 165,500 182,488", "28,518 42,508 52,492 70,482",
  "30,544 42,544 42,560 56,570 80,578 102,572 112,590 110,608", "100,604 114,596 126,604 136,616", "258,684 260,702",
];
const AUSSIE =
  "161,760 175,752 187,748 197,736 208,732 216,720 236,722 240,728 234,734 246,740 256,742 260,720 265,718 270,734 280,750 292,762 302,772 303,786 298,800 290,812 288,822 274,826 262,824 256,814 246,808 236,798 226,794 204,798 186,806 172,810 167,804 166,788";

const Land = () => (
  <>
    <g fill="#e2e2e2"><Shapes list={CONTINENTS} amp={7} /></g>
    <g fill="#e5e5e5"><Shapes list={ISLANDS} /></g>
    <g fill="#ebebeb"><Shapes list={[ANTARCTICA]} amp={4} /></g>
    <path d="M620 402l12-10 14-4-10 8 4 4zM724 484l12 4 10 10-6 6-10-6z" fill="#fff" opacity=".8" />
    <g fill="none" stroke="#c4c4c4" strokeWidth="2"><Lines list={WORLD_BORDERS} amp={5} /></g>
  </>
);

const DOT_COLORS = [
  "#4e79a7", "#a0cbe8", "#f28e2b", "#ffbe7d", "#59a14f", "#8cd17d", "#b6992d", "#f1ce63",
  "#499894", "#86bcb6", "#e15759", "#ff9d9a", "#79706e", "#bab0ac", "#d37295", "#fabfd2",
  "#b07aa1", "#d4a6c8", "#9d7660", "#d7b5a6",
];

/* x, y, index into DOT_COLORS */
const DOTS: number[][] = [
  [176, 770, 8], [170, 790, 14], [168, 802, 4], [188, 792, 17], [206, 770, 14], [214, 760, 17],
  [262, 712, 12], [258, 722, 18], [272, 722, 12], [276, 734, 12], [250, 716, 12], [238, 716, 9],
  [228, 718, 18], [214, 728, 6], [240, 732, 9], [200, 744, 18], [218, 778, 9], [210, 768, 15],
  [226, 770, 6], [244, 770, 18], [250, 784, 5], [236, 780, 2], [260, 742, 0], [284, 744, 16],
  [290, 760, 16], [300, 760, 10], [306, 776, 3], [308, 790, 2], [304, 804, 14], [298, 814, 16],
  [292, 824, 6], [284, 836, 16], [276, 848, 9], [270, 836, 17], [262, 828, 16], [254, 820, 12],
  [246, 812, 16], [238, 806, 9], [228, 800, 14], [272, 800, 2], [256, 796, 12], [278, 786, 13],
  [286, 770, 7], [264, 770, 4], [270, 756, 3], [166, 752, 5], [159, 770, 14], [162, 786, 8],
  [186, 780, 15], [190, 804, 17], [181, 760, 4], [176, 811, 3], [191, 742, 3], [213, 741, 7],
  [220, 719, 7], [263, 711, 12], [260, 727, 16], [241, 736, 15], [254, 746, 8], [234, 754, 5],
  [272, 740, 15], [285, 751, 2], [294, 768, 10], [276, 764, 7], [221, 774, 8], [212, 793, 2],
  [232, 799, 15], [238, 786, 7], [252, 768, 8], [260, 779, 1], [271, 796, 0], [295, 790, 14],
  [286, 802, 6], [249, 810, 1], [278, 815, 4], [269, 825, 17], [280, 846, 5], [274, 840, 9],
  [302, 784, 2], [321, 796, 3], [616, 553, 3],
];

const WorldPanel = ({ dots }: { dots?: boolean }) => (
  <svg viewBox="28 223 723 961" preserveAspectRatio="none" role="img" aria-label={dots ? "Airports by city" : "Country outline"}>
    <Land />
    {dots ? (
      DOTS.map(([x, y, c], i) => (
        <circle key={i} cx={x} cy={y} r="11" fill={DOT_COLORS[c]} stroke="#6a625e" strokeWidth="2.500" />
      ))
    ) : (
      <g fill="#f2a04e" stroke="#6a5a48" strokeWidth="3">
        <Shapes list={[AUSSIE]} amp={4} />
        <path d="M271 836l14-2-2 12-6 4z" fill="#d9875f" />
      </g>
    )}
  </svg>
);

const CITIES: [string, string][] = [
  ["Null", "#4e79a7"], ["Adelaide", "#a0cbe8"], ["Airlie Beach", "#f28e2b"], ["Albany", "#ffbe7d"],
  ["Albury", "#59a14f"], ["Ali-Curung", "#8cd17d"], ["Alice Springs", "#b6992d"], ["Alpha", "#f1ce63"],
  ["Amata", "#499894"], ["Amberley", "#86bcb6"], ["Ampilatwatja", "#e15759"], ["Angatja Homeland", "#ff9d9a"],
  ["Areyonga", "#79706e"], ["Argyle", "#bab0ac"], ["Armidale", "#d37295"], ["Atherton", "#fabfd2"],
  ["Aurukun", "#b07aa1"], ["Avalon", "#d4a6c8"],
];

const CountryPicker = ({ id, value }: { id: string; value: string }) => (
  <>
    <FieldLabel htmlFor={id}>Country (airports.csv)</FieldLabel>
    <Picker>
      <select id={id}><option>{value}</option></select>
      <PickerArrow><Caret color="#222" w={8} /></PickerArrow>
    </Picker>
  </>
);

const Dashboard = () => (
  <>
    <Canvas>
      <Column>
        <PlainTitle>World map Airports within a Country -Afghanistan</PlainTitle>
        <MapFrame $h={317}>
          <AfghanMap />
          <Credit>© Mapbox © OSM</Credit>
        </MapFrame>
        <Narrow $center>
          {["Num", "ber", "of", "Airp", "orts"].map((t) => <span key={t}>{t}</span>)}
        </Narrow>
        <BigNumber>148</BigNumber>
      </Column>
      <Filters>
        <CountryPicker id="country-a" value="Afghanistan" />
        <FieldLabel as="div">Country (airports.csv)</FieldLabel>
        <LegendBlock>
          <LegendItem as="div"><Swatch $c="#6f93b9" />Afghanistan</LegendItem>
        </LegendBlock>
        <CountryPicker id="country-b" value="Australia" />
        <FieldLabel as="div">City</FieldLabel>
        <CityArea>
          <ul>
            {CITIES.map(([name, c]) => (
              <LegendItem key={name}><Swatch $c={c} />{name}</LegendItem>
            ))}
            <LegendItem><Swatch $c="#9d7660" /></LegendItem>
          </ul>
          <Track $w={16}>
            <TrackEnd aria-label="Scroll cities up"><Up /></TrackEnd>
            <Thumb $share={40} />
            <Rest $share={308} />
          </Track>
        </CityArea>
      </Filters>
      <Column>
        <Zone>
          <ZoneTitle>World map showing details of all Airports within a Country</ZoneTitle>
          <WorldFrame $h={321}>
            <WorldPanel />
            <WorldPanel dots />
            <Credit $big>© 2023 Mapbox © OpenStreetMap</Credit>
            <Unknown>290 unknown</Unknown>
          </WorldFrame>
          <Grip />
          <ZoneTools>
            <button aria-label="Remove"><Glyph w={14} h={14} color="#fff" sw={1.5}><path d="M2.500 2.500l9 9M11.500 2.500l-9 9" /></Glyph></button>
            <button aria-label="Go to sheet"><Glyph w={14} h={14} color="#fff" sw={1.3}><path d="M6 3.500H1.500v9h9V8M5.500 8.500L11 3" /><path d="M8 1h5v5z" fill="#fff" /></Glyph></button>
            <button aria-label="Use as filter"><Glyph w={14} h={14} color="#fff" sw={1.3}><path d="M1 1.500h12v1.200L8.500 8v5.500h-3V8L1 2.700z" /></Glyph></button>
            <button aria-label="More options"><Caret color="#fff" w={8} /></button>
          </ZoneTools>
        </Zone>
        <Narrow>
          {["Num", "ber", "of", "Airpo", "rts"].map((t) => <span key={t}>{t}</span>)}
        </Narrow>
      </Column>
    </Canvas>
    <Margin />
    <Track $w={16}>
      <TrackEnd aria-label="Scroll dashboard up"><Up /></TrackEnd>
      <Thumb $share={347} />
      <Rest $share={164} />
      <TrackEnd aria-label="Scroll dashboard down"><Down /></TrackEnd>
    </Track>
  </>
);

/* ---------- sheet tabs and status ---------- */

const SheetTabs = styled.div`
  display: flex;
  height: 30px;
  flex: none;
  border-top: 1px solid #c4c4c4;
  border-bottom: 1px solid #c9c9c9;
  background: #e6e6e6;
  overflow: hidden;
`;

const SheetTab = styled.button<{ $w: number; $on?: boolean }>`
  display: flex;
  align-items: center;
  gap: 4px;
  flex: 0 1 ${(p) => p.$w}px;
  min-width: 0;
  padding-left: 6px;
  border-right: 1px solid #c9c9c9;
  background: ${(p) => (p.$on ? "#fff" : "transparent")};
  font-size: 12px;
  font-weight: ${(p) => (p.$on ? 700 : 400)};
  color: ${(p) => (p.$on ? "#555" : "#777")};
  white-space: nowrap;
  overflow: hidden;
  &:first-child { border-right-width: 2px; }
`;

const NewTab = styled.button`
  display: grid;
  place-items: center;
  width: 32px;
  flex: none;
  border-left: 1px solid #c9c9c9;
`;

const Status = styled.footer`
  display: flex;
  align-items: center;
  gap: 19px;
  height: 21px;
  flex: none;
  padding-left: 3px;
  background: #ebebeb;
  font-size: 11px;
  color: #333;
`;

const StatusRight = styled.div`
  display: flex;
  height: 100%;
  margin-left: auto;
`;

const Cell = styled.div<{ $w: number }>`
  display: flex;
  align-items: center;
  justify-content: space-around;
  width: ${(p) => p.$w}px;
  border-left: 1px solid #cfcfcf;
`;

const UserButton = styled.button`
  display: flex;
  align-items: center;
  gap: 9px;
  width: 100%;
  padding-left: 6px;
  svg:last-child { margin-left: 10px; }
`;

const GridIcon = () => (
  <path d="M1 1.500h10v10H1zM6 1.500v10M1 6.500h10" />
);

const TABS: [string, number][] = [
  ["Airports at Higher altitude within...", 200],
  ["Airports at Higher altitude within...", 200],
  ["Airports at Higher altitude in the ...", 200],
  ["Airlines within a Country", 154],
  ["Number of flights from airport", 187],
];

const BottomTabs = () => (
  <SheetTabs>
    <SheetTab $w={131}>
      <Glyph w={14} h={16} sw={1}><path d="M4 3.500v8q3.500 2.500 7 0v-8M4 3.500q3.500-2 7 0-3.500 2-7 0" /></Glyph>
      Data Source
    </SheetTab>
    {TABS.map(([name, w], i) => <SheetTab key={i} $w={w}>{name}</SheetTab>)}
    <SheetTab $w={102} $on>
      <Glyph w={12} h={13} sw={1}><GridIcon /></Glyph>
      Dashboard 1
    </SheetTab>
    <SheetTab $w={9} aria-label="Next tab">
      <Glyph w={12} h={13} sw={1}><GridIcon /></Glyph>
    </SheetTab>
    <Spring />
    <NewTab aria-label="New Worksheet">
      <Glyph w={16} h={16} sw={1}>
        <path d="M8 13.500H1.500v-11h12v5M5 11V8M7.500 11V5M10 9V7" /><path d="M12 9v6.500M8.800 12.200h6.500" strokeWidth="1.800" />
      </Glyph>
    </NewTab>
    <NewTab aria-label="New Dashboard">
      <Glyph w={16} h={16} sw={1}>
        <path d="M8 12.500H1.500v-10h12v5M7.500 2.500v10M1.500 7.500h12" /><path d="M12 9v6.500M8.800 12.200h6.500" strokeWidth="1.800" />
      </Glyph>
    </NewTab>
    <NewTab aria-label="New Story">
      <Glyph w={16} h={16} sw={1}>
        <path d="M7 13.500q-2-1.500-5.500-1v-10q4 0 6 1.500 2-1.500 6-1.500v5M7.500 4v9" /><path d="M12 9v6.500M8.800 12.200h6.500" strokeWidth="1.800" />
      </Glyph>
    </NewTab>
  </SheetTabs>
);

const StatusBar = () => (
  <Status>
    <span>292 marks</span>
    <span>1 row by 2 columns</span>
    <span>SUM of AVG(Longitude): 40,502.5</span>
    <StatusRight>
      <Cell $w={127}>
        <UserButton>
          <Glyph w={11} h={15} sw={1}>
            <circle cx="5.500" cy="3.500" r="2.200" /><path d="M1 13.500V10q0-2.500 2.500-2.500h4Q10 7.500 10 10v3.500z" />
          </Glyph>
          priya mahesh
          <Caret color="#111" w={8} />
        </UserButton>
      </Cell>
      <Cell $w={27} />
      <Cell $w={27} />
      <Cell $w={47} />
      <Cell $w={71}>
        <Glyph w={8} h={8} sw={0}><path d="M0 0h1.500v8H0zM7 0v8L2 4z" fill="#555" /></Glyph>
        <Glyph w={8} h={8} sw={0}><path d="M6 0v8L2 4z" fill="#555" /></Glyph>
        <Glyph w={8} h={8} sw={0}><path d="M2 0v8l4-4z" fill="#555" /></Glyph>
        <Glyph w={8} h={8} sw={0}><path d="M6.500 0H8v8H6.500zM1 0v8l5-4z" fill="#555" /></Glyph>
      </Cell>
      <Cell $w={68}>
        <Glyph w={12} h={12} sw={0}>
          <path d="M0 0h3v3H0zM4 0h3v3H4zM8 0h3v3H8zM0 4h3v3H0zM4 4h3v3H4zM8 4h3v3H8zM0 8h3v3H0zM4 8h3v3H4zM8 8h3v3H8z" fill="#b5b5b5" />
        </Glyph>
        <Glyph w={12} h={12} sw={0}><path d="M0 0h11v7H0zM0 8h3v3H0zM4 8h3v3H4zM8 8h3v3H8z" fill="#b5b5b5" /></Glyph>
        <Glyph w={12} h={12} sw={0}><path d="M0 0h11v11H0z" fill="#555" /></Glyph>
      </Cell>
    </StatusRight>
  </Status>
);

/* ---------- taskbar ---------- */

const Taskbar = styled.div`
  display: flex;
  height: 40px;
  flex: none;
  background: linear-gradient(90deg, #8b8831 0, #87852c 31%, #7b7825 40%, #85822a 55%, #817e28 66%, #918e3f 78%, #949344 88%, #8f8b33 100%);
  color: #fff;
  font: 12px/18px ${TASK};
`;

const TaskButton = styled.button<{ $w?: number; $open?: boolean; $on?: boolean }>`
  display: grid;
  place-items: center;
  width: ${(p) => p.$w ?? 49}px;
  flex: none;
  background: ${(p) => (p.$on ? "#adab2f" : "transparent")};
  background-image: ${(p) => (p.$open ? "linear-gradient(#efee9a, #efee9a)" : "none")};
  background-repeat: no-repeat;
  background-position: center bottom;
  background-size: ${(p) => (p.$on ? "100%" : "40px")} 2px;
`;

const Search = styled.label`
  display: flex;
  align-items: center;
  gap: 9px;
  flex: none;
  width: 344px;
  padding: 0 14px 0 9px;
  background: #f8f9f5;
  input {
    flex: 1;
    min-width: 0;
    padding: 0;
    border: 0;
    outline: 0;
    background: transparent;
    font-size: 14px;
    color: #333;
  }
  input::placeholder { color: #333; opacity: 1; }
`;

const Tray = styled.div`
  display: flex;
  align-items: center;
  margin-left: auto;
  padding-right: 13px;
`;

const TrayItem = styled.button<{ $w: number }>`
  display: grid;
  place-items: center;
  width: ${(p) => p.$w}px;
  height: 40px;
`;

const Clock = styled(TrayItem)`
  align-content: center;
  font-size: 11px;
  line-height: 18px;
`;

const TaskBar = () => (
  <Taskbar>
    <TaskButton $w={48} aria-label="Start">
      <Glyph w={16} h={16} sw={0}>
        <path d="M0 2.300L7 1.300V7.600H0zM8 1.200L16 0v7.600H8zM0 8.500h7v6.300L0 13.800zM8 8.500h8V16l-8-1.200z" fill="#fff" />
      </Glyph>
    </TaskButton>
    <Search>
      <Glyph w={22} h={22} sw={3} color="#111"><circle cx="11" cy="11" r="9" /></Glyph>
      <input aria-label="Search" placeholder="Type here to search" />
      <Glyph w={12} h={18} color="#333">
        <rect x="3.500" y="1" width="5" height="10.500" rx="2" /><path d="M1 9v3.500q0 2 2 2h6q2 0 2-2V9M6 14.500v3" />
      </Glyph>
    </Search>
    <TaskButton aria-label="Task view">
      <Glyph w={18} h={18} color="#fff" sw={1.3}>
        <path d="M2 1v3h9V1M2 17v-3h9v3M2 6.500h9v5H2zM15 1v16M14 6.500h2.500v3H14z" />
      </Glyph>
    </TaskButton>
    <TaskButton $w={50} aria-label="Store">
      <Glyph w={24} h={24} sw={0}>
        <path d="M7 6V2.500Q7 1 8.500 1h7Q17 1 17 2.500V6" fill="none" stroke="#f1f1f1" strokeWidth="1.500" />
        <path d="M1 6h22v16q0 2-2 2H3q-2 0-2-2z" fill="#f8f8f8" />
        <path d="M7 10h4.500v4.500H7z" fill="#f25022" /><path d="M12.500 10H17v4.500h-4.500z" fill="#7fba00" />
        <path d="M7 15.500h4.500V20H7z" fill="#00a4ef" /><path d="M12.500 15.500H17V20h-4.500z" fill="#ffb900" />
      </Glyph>
    </TaskButton>
    <TaskButton $open aria-label="File Explorer">
      <Glyph w={24} h={22} sw={0}>
        <path d="M1 1h9l2 3h10v16H1z" fill="#f5cb62" /><path d="M1 6h22v15H1z" fill="#fde08d" />
        <path d="M5 12q0-2 2-2h10q2 0 2 2v9h-4v-4q0-1-1-1h-4q-1 0-1 1v4H5z" fill="#45aee0" />
      </Glyph>
    </TaskButton>
    <TaskButton $open aria-label="Edge">
      <Glyph w={22} h={24} sw={0}>
        <path d="M1 12Q2 1 12 1q9 0 9 10v3H7.500q.5 4.500 6 4.500 3.500 0 6.500-2v5Q17 23.500 12.500 23.500 4 23.500 3.500 15.500q.3-5.500 5-7.500Q3.500 8.500 1 12zM7.800 10h7q-.3-4-3.500-4T7.800 10z" fill="#0a78d4" />
      </Glyph>
    </TaskButton>
    <TaskButton aria-label="Microsoft 365">
      <Glyph w={24} h={24} sw={0}>
        <path d="M11 1L5 4Q3 5.500 3 8v7q0 2 1.500 3L8 20v-3.500q-1-1-1-2.500v-3l7-5V1z" fill="#8a63d8" />
        <path d="M11 1.200q2-.7 4 .3l5 3q2 1.200 2 3.500v8l-5-3V9.500L9 5z" fill="#62b5ee" />
        <path d="M22 12v4q0 2-2 3.200l-6 3.300q-2 1-4 0L4.500 18q5 1 8-1l4.500-3v-4.500z" fill="#3f4fc9" />
      </Glyph>
    </TaskButton>
    <TaskButton $w={50} $open aria-label="Mail">
      <Glyph w={26} h={26} sw={0}>
        <path d="M1 9L13 0l12 9v15H1z" fill="#1464b4" /><path d="M3 9h20v10H3z" fill="#fff" />
        <path d="M1 9l12 9L1 25z" fill="#2fa8ea" /><path d="M25 9L13 18l12 7z" fill="#1b8fe0" /><path d="M1 25l12-9 12 9z" fill="#36b1f2" />
      </Glyph>
    </TaskButton>
    <TaskButton $w={45} $open $on aria-label="Tableau">
      <TableauMark size={24} />
    </TaskButton>
    <TaskButton $w={56} $open aria-label="Cube viewer">
      <Glyph w={24} h={26} sw={1} color="#111">
        <path d="M2 13h12v11H2z" fill="#f00" /><path d="M2 13l4-4h11l-3 4z" fill="#00c" /><path d="M14 13l3-4v11l-3 4z" fill="#0a0" />
        <path d="M6 3v8M16 18h4" /><circle cx="6" cy="3" r="2" fill="#fff" stroke="#ee0" /><circle cx="20" cy="17.500" r="2" fill="#fff" stroke="#ee0" />
      </Glyph>
    </TaskButton>
    <Tray>
      <TrayItem $w={40} aria-label="People">
        <Glyph w={18} h={18} color="#fff">
          <circle cx="6" cy="9" r="2.500" /><path d="M1.500 17q0-5 4.500-5.500 4 .5 4.500 5.500" /><circle cx="11" cy="3.500" r="2.500" /><path d="M9.500 7.500q5-2 6 4.500" />
        </Glyph>
      </TrayItem>
      <TrayItem $w={30} aria-label="Hidden icons"><Glyph w={12} h={8} color="#fff"><path d="M1 7l5-5 5 5" /></Glyph></TrayItem>
      <TrayItem $w={20} aria-label="Battery">
        <Glyph w={16} h={10} color="#fff"><path d="M1 1.500h12.500v7H1zM15 3.500v3" /><path d="M3 3.500h2v3H3z" fill="#fff" /></Glyph>
      </TrayItem>
      <TrayItem $w={26} aria-label="Network">
        <Glyph w={18} h={18} color="#c9c88c">
          <path d="M7 17Q7 7 17 5M10 17q0-6 7-8M13 17q0-4 4-4.500" /><path d="M3 1v5M1 2.500l4 2.500M5 2.500L1 5" stroke="#fff" strokeWidth=".9" />
        </Glyph>
      </TrayItem>
      <TrayItem $w={34}>ENG</TrayItem>
      <Clock $w={74}><span>01:25</span><span>19-10-2023</span></Clock>
      <TrayItem $w={38} aria-label="Notifications">
        <Glyph w={18} h={18} color="#fff"><path d="M1.500 1.500h15v12H12L9.500 16.500 7 13.500H1.500z" /></Glyph>
      </TrayItem>
    </Tray>
  </Taskbar>
);

const MENUS = ["File", "Data", "Worksheet", "Dashboard", "Story", "Analysis", "Map", "Format", "Server", "Window", "Help"];

export default function App() {
  return (
    <Page>
      <Global />
      <TitleBar>
        <TableauMark size={15} />
        <span>Tableau - AIRLINES - Tableau license expires in 8 days</span>
        <WindowButtons>
          <WindowButton aria-label="Minimize"><Glyph w={12} h={12} color="#111" sw={1}><path d="M1 6.500h10" /></Glyph></WindowButton>
          <WindowButton aria-label="Restore"><Glyph w={12} h={12} color="#111" sw={1}><path d="M1.500 3.500h7v7h-7zM3.500 3.500v-2h7v7h-2" /></Glyph></WindowButton>
          <WindowButton aria-label="Close"><Glyph w={12} h={12} color="#111" sw={1}><path d="M1 1l10 10M11 1L1 11" /></Glyph></WindowButton>
        </WindowButtons>
      </TitleBar>
      <MenuBar>
        {MENUS.map((m) => <button key={m}>{m}</button>)}
      </MenuBar>
      <Toolbar />
      <Body>
        <SidePanel />
        <Dashboard />
      </Body>
      <BottomTabs />
      <StatusBar />
      <TaskBar />
    </Page>
  );
}
